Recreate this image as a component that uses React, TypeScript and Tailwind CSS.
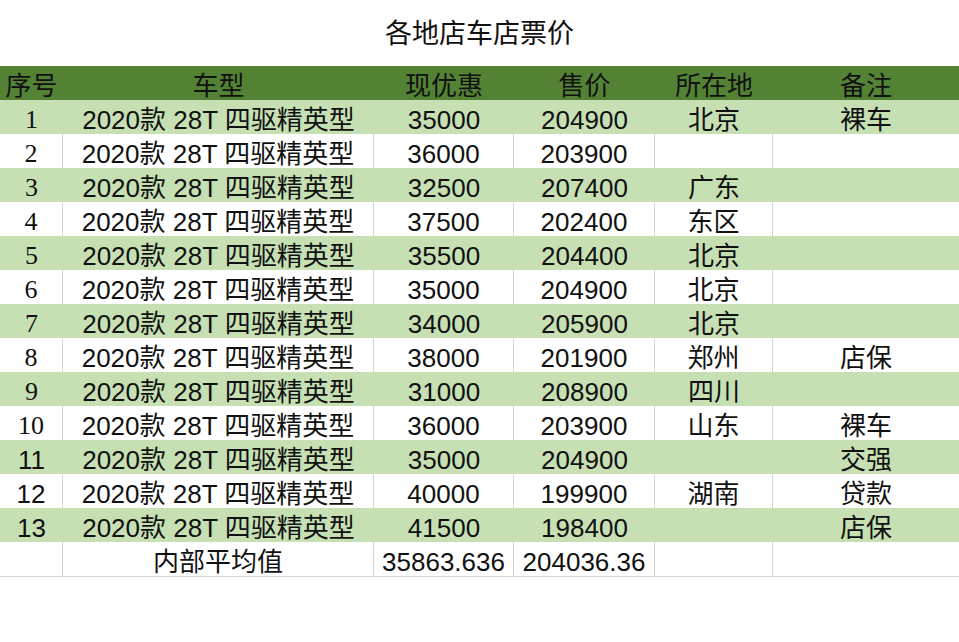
const rows = [
  { no: "1", off: "35000", price: "204900", place: "北京", note: "裸车" },
  { no: "2", off: "36000", price: "203900", place: "", note: "" },
  { no: "3", off: "32500", price: "207400", place: "广东", note: "" },
  { no: "4", off: "37500", price: "202400", place: "东区", note: "" },
  { no: "5", off: "35500", price: "204400", place: "北京", note: "" },
  { no: "6", off: "35000", price: "204900", place: "北京", note: "" },
  { no: "7", off: "34000", price: "205900", place: "北京", note: "" },
  { no: "8", off: "38000", price: "201900", place: "郑州", note: "店保" },
  { no: "9", off: "31000", price: "208900", place: "四川", note: "" },
  { no: "10", off: "36000", price: "203900", place: "山东", note: "裸车" },
  { no: "11", off: "35000", price: "204900", place: "", note: "交强" },
  { no: "12", off: "40000", price: "199900", place: "湖南", note: "贷款" },
  { no: "13", off: "41500", price: "198400", place: "", note: "店保" },
];

const grid = "grid grid-cols-[63px_311px_140px_141px_118px_186px]";
const cell = "flex h-[34px] items-center justify-center whitespace-nowrap pt-[6px]";

function Cells({ values, lined, serifFirst }: { values: string[]; lined: boolean; serifFirst?: boolean }) {
  return (
    <>
      {values.map((v, i) => (
        <div
          key={i}
          className={[
            cell,
            lined && i < 5 ? "border-r border-[#d4d4d4]" : "",
            i === 0 && serifFirst ? "font-['Liberation_Serif','Noto_Sans_CJK_SC',serif]" : "",
          ].join(" ")}
        >
          {v}
        </div>
      ))}
    </>
  );
}

export default function App() {
  return (
    <div className="h-[642px] w-[959px] bg-white font-['Liberation_Sans','Noto_Sans_CJK_SC',sans-serif] text-[26px] leading-[34px] text-[#111]">
      <h1 className="flex h-[66px] items-center justify-center pt-[2px] text-[27px] font-normal">各地店车店票价</h1>

      <div className={`${grid} bg-[#548235]`}>
        <Cells values={["序号", "车型", "现优惠", "售价", "所在地", "备注"]} lined={false} />
      </div>

      {rows.map((r, idx) => {
        const green = idx % 2 === 0;
        return (
          <div key={r.no} className={`${grid} ${green ? "bg-[#c6e0b4]" : "bg-white"}`}>
            <Cells
              values={[r.no, "2020款 28T 四驱精英型", r.off, r.price, r.place, r.note]}
              lined={!green}
              serifFirst={Number(r.no) <= 10}
            />
          </div>
        );
      })}

      <div className={`${grid} border-b border-[#d4d4d4]`}>
        <Cells values={["", "内部平均值", "35863.636", "204036.36", "", ""]} lined />
      </div>
    </div>
  );
}
